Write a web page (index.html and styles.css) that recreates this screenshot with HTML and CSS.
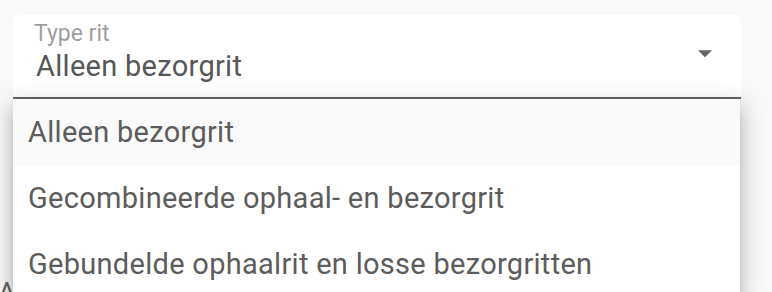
FILE: index.html
```html
<!DOCTYPE html>
<html lang="nl">
<head>
    <meta charset="UTF-8">
    <link rel="stylesheet" href="styles.css">
</head>
<body>
    <div class="form">
        <div class="select-wrap">
            <div class="select-field">
                <label class="select-label">Type rit</label>
                <div class="select-value">Alleen bezorgrit</div>
                <svg class="select-arrow" viewBox="0 0 24 24" width="34" height="34">
                    <path d="M7 10l5 5 5-5z"></path>
                </svg>
            </div>
            <ul class="menu">
                <li class="menu-item selected">Alleen bezorgrit</li>
                <li class="menu-item">Gecombineerde ophaal- en bezorgrit</li>
                <li class="menu-item">Gebundelde ophaalrit en losse bezorgritten</li>
            </ul>
        </div>
        <div class="next-field">Afhaaladres</div>
    </div>
</body>
</html>
```

FILE: styles.css
```css
html, body {
    margin: 0;
    padding: 0;
    height: 100%;
    background: #f9f9f9;
    font-family: Roboto, 'Noto Sans', sans-serif;
    overflow: hidden;
}

.form {
    padding: 15px 31px 0 13px;
}

.select-wrap {
    position: relative;
}

.select-field {
    position: relative;
    height: 82px;
    background: #fff;
    border-radius: 7px 7px 0 0;
    border-bottom: 2px solid #666;
}

.select-label {
    position: absolute;
    left: 21px;
    top: 5px;
    font-size: 23px;
    color: #9e9e9e;
}

.select-value {
    padding: 32px 0 0 23px;
    font-size: 29px;
    line-height: 38px;
    color: #575757;
    letter-spacing: 0.01em;
}

.select-arrow {
    position: absolute;
    right: 19px;
    top: 21px;
    fill: #666;
}

.menu {
    position: absolute;
    left: 0;
    right: 1px;
    top: 84px;
    margin: 0;
    padding: 0;
    list-style: none;
    background: #fff;
    border-radius: 0 0 6px 6px;
    box-shadow: 0 8px 8px -5px rgba(0, 0, 0, 0.2),
                0 13px 17px 2px rgba(0, 0, 0, 0.14),
                0 5px 24px 4px rgba(0, 0, 0, 0.12);
    z-index: 2;
}

.menu-item {
    height: 66px;
    line-height: 66px;
    padding: 0 15px;
    font-size: 29px;
    color: #5c5c5c;
    letter-spacing: 0.01em;
    white-space: nowrap;
}

.menu-item.selected {
    background: #fafafa;
}

.next-field {
    margin: 178px 0 0 -15px;
    font-size: 27px;
    color: #666;
}
```
